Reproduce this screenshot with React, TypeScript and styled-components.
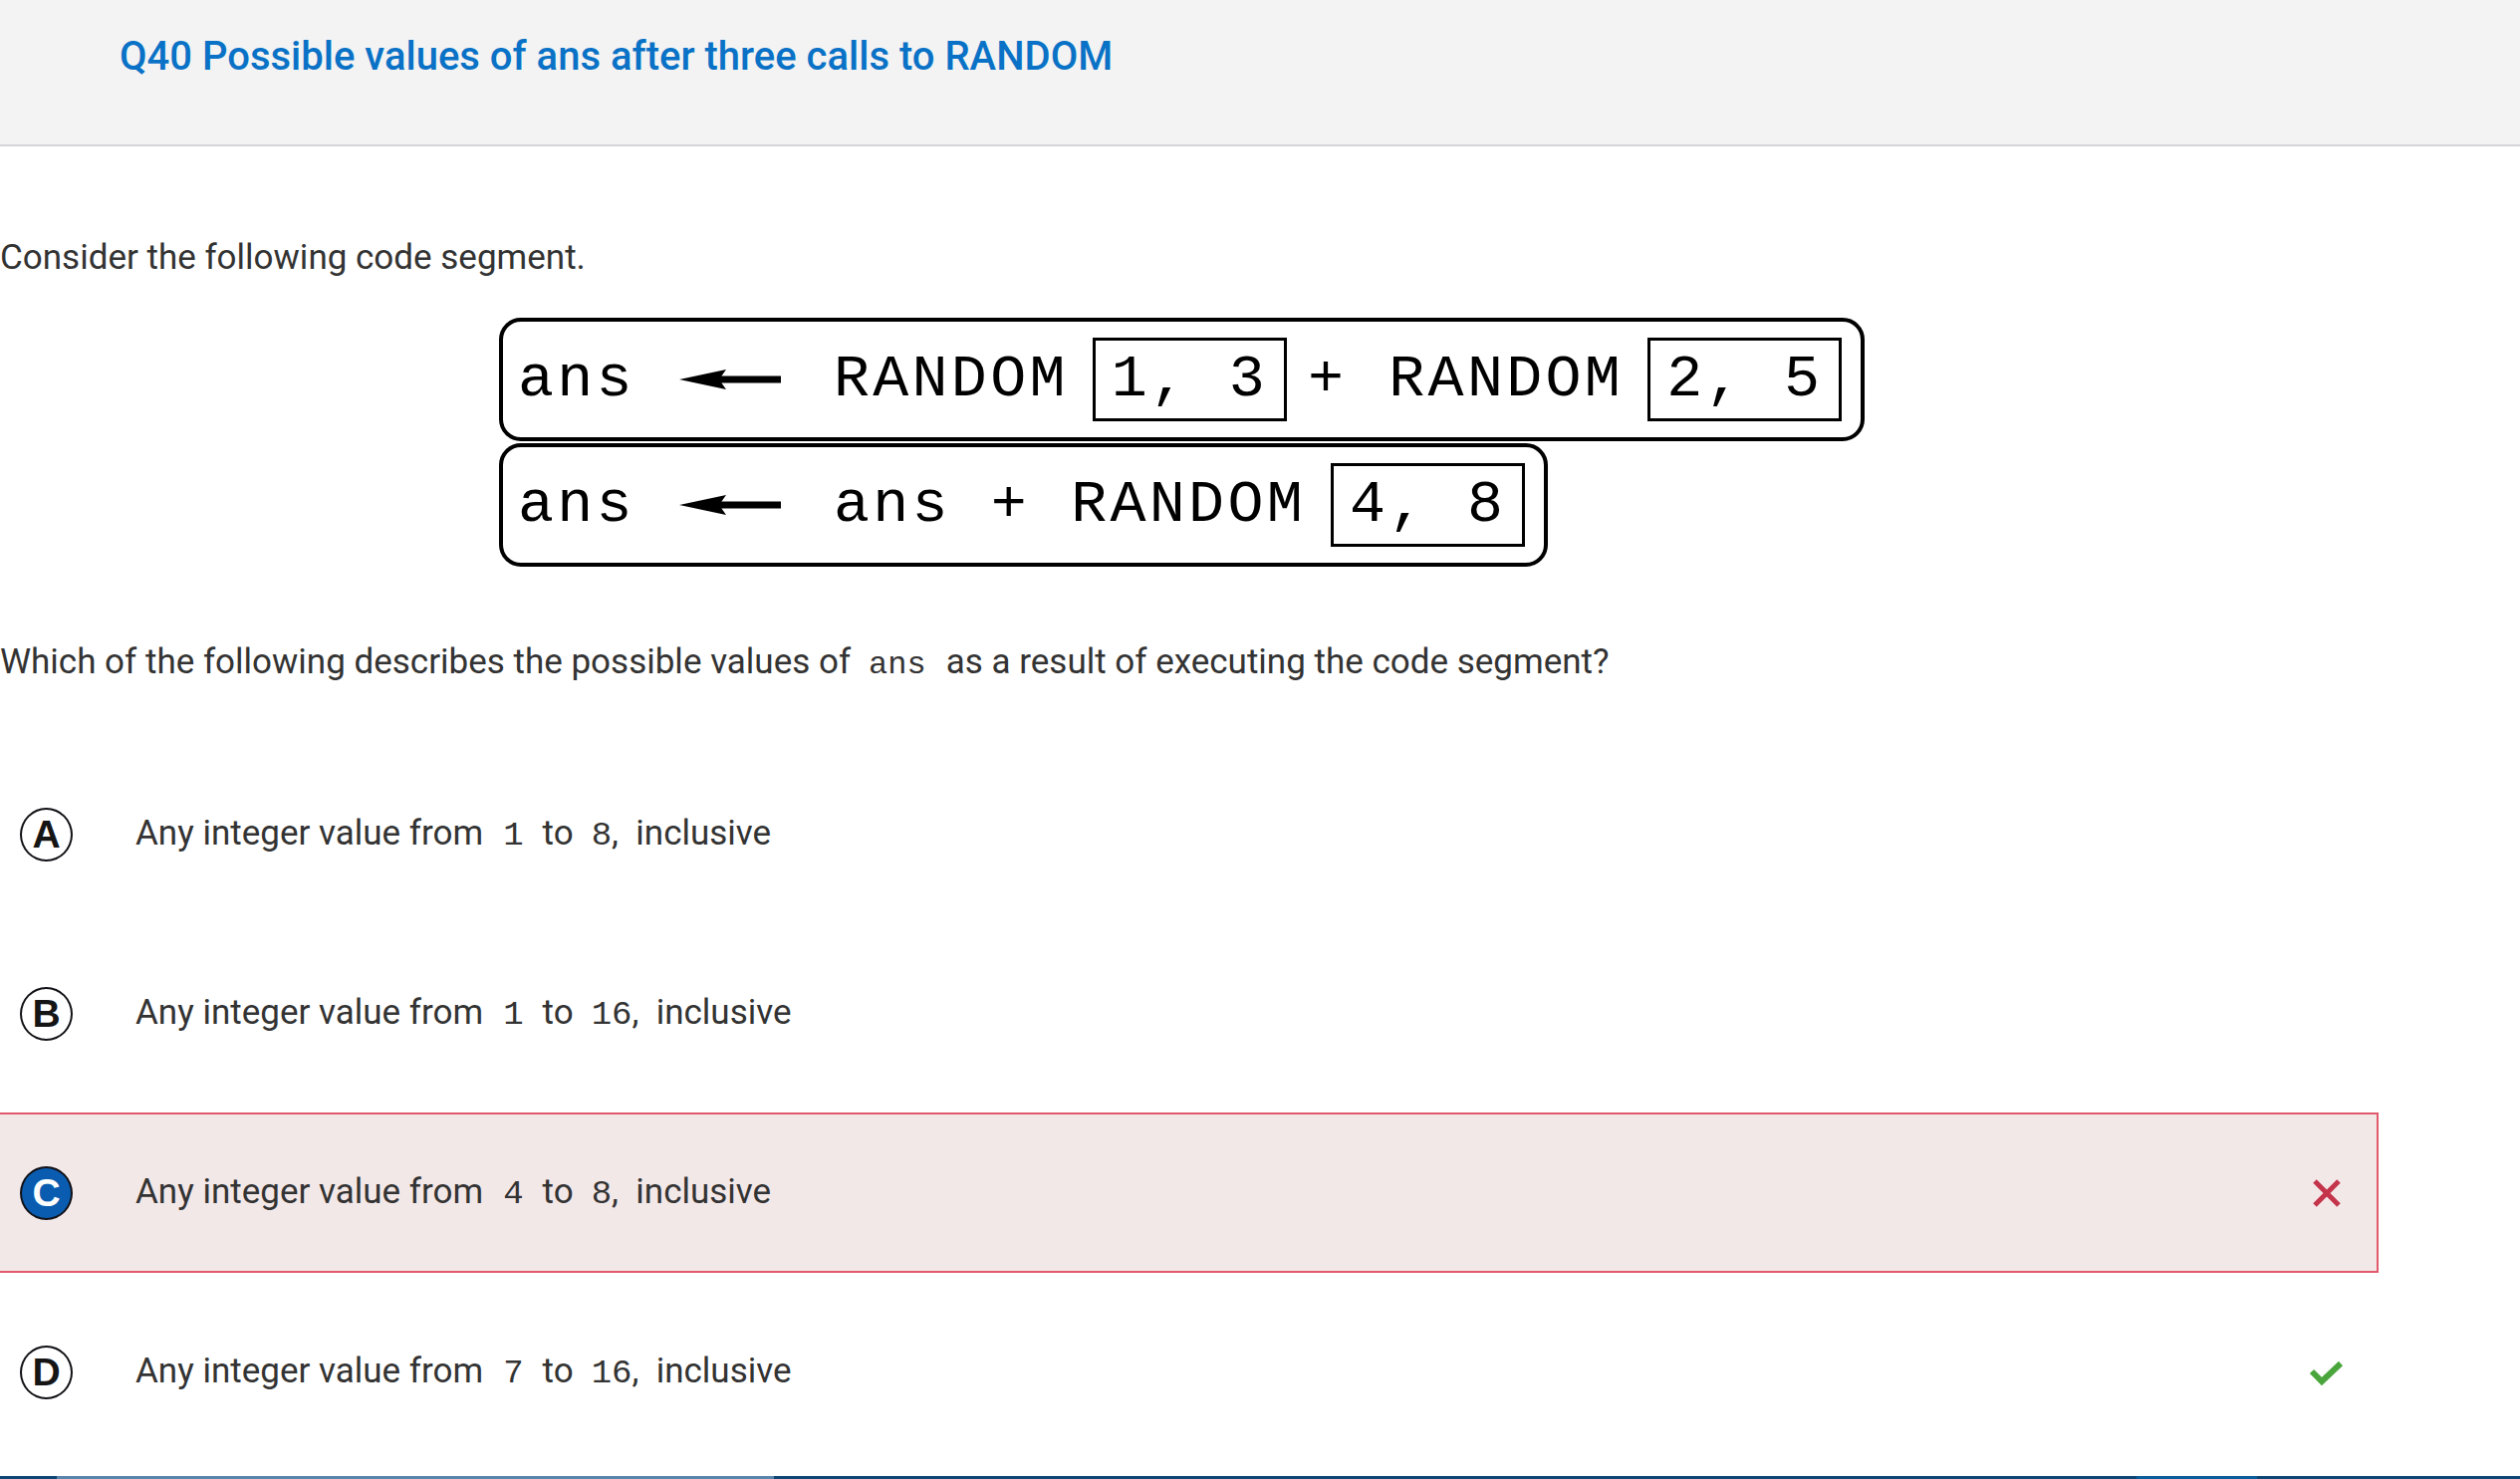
import React from 'react';
import styled, { createGlobalStyle } from 'styled-components';

const Global = createGlobalStyle`
  html, body { margin: 0; padding: 0; background: #ffffff; }
  body {
    font-family: Roboto, "Liberation Sans", Arial, sans-serif;
    color: #333333;
    overflow: hidden;
  }
  * { box-sizing: border-box; }
`;

const Page = styled.div`
  display: flex;
  flex-direction: column;
  width: 100%;
  height: 100vh;
  overflow: hidden;
`;

const Header = styled.header`
  flex-shrink: 0;
  height: 147px;
  background: #f3f3f3;
  border-bottom: 2px solid #d5d5da;
  padding: 37px 0 0 120px;
`;

const Title = styled.h1`
  margin: 0;
  font-size: 40px;
  line-height: 40px;
  font-weight: 500;
  color: #0a72c6;
  white-space: nowrap;
`;

const Main = styled.main`
  flex: 1;
  display: flex;
  flex-direction: column;
  padding-top: 88px;
`;

const Para = styled.p<{ $mt?: number }>`
  margin: ${(p) => p.$mt ?? 0}px 0 0 0;
  font-size: 35px;
  line-height: 48px;
  color: #333333;
  white-space: nowrap;
`;

const InlineCode = styled.code`
  font-family: "Liberation Mono", "Courier New", monospace;
  font-size: 32px;
  margin: 0 20px 0 18px;
  color: #333333;
`;

/* ---------- code figure ---------- */

const Figure = styled.div`
  margin: 36px 0 0 501px;
  display: flex;
  flex-direction: column;
  align-items: flex-start;
  gap: 2px;
`;

const Statement = styled.div`
  display: flex;
  align-items: center;
  height: 124px;
  border: 4px solid #000000;
  border-radius: 22px;
  padding: 0 19px 0 15px;
  font-family: "Liberation Mono", "Courier New", monospace;
  font-size: 60px;
  letter-spacing: 3.3px;
  color: #000000;
`;

const Tok = styled.span<{ $ml?: number }>`
  margin-left: ${(p) => p.$ml ?? 0}px;
  white-space: pre;
  line-height: 1;
`;

const ArgBox = styled.span<{ $ml: number }>`
  margin-left: ${(p) => p.$ml}px;
  height: 84px;
  display: flex;
  align-items: center;
  border: 3px solid #000000;
  padding: 0 16px;
  white-space: pre;
  line-height: 1;
`;

const ArrowSvg = styled.svg<{ $ml: number }>`
  margin-left: ${(p) => p.$ml}px;
  flex-shrink: 0;
  display: block;
`;

const Arrow = ({ ml }: { ml: number }) => (
  <ArrowSvg $ml={ml} width="102" height="22" viewBox="0 0 102 22">
    <polygon points="0,11 47,1 40,11 47,21" fill="#000" />
    <rect x="38" y="7.5" width="64" height="7" fill="#000" />
  </ArrowSvg>
);

/* ---------- options ---------- */

const Options = styled.div`
  margin-top: 65px;
  width: 2388px;
  display: flex;
  flex-direction: column;
  gap: 19px;
`;

const Option = styled.div<{ $wrong?: boolean }>`
  display: flex;
  align-items: center;
  height: 161px;
  border: 2px solid ${(p) => (p.$wrong ? '#e2596b' : 'transparent')};
  border-left: none;
  background: ${(p) => (p.$wrong ? '#f3e8e8' : 'transparent')};
  padding: 0 30px 0 20px;
`;

const Bubble = styled.span<{ $selected?: boolean }>`
  flex-shrink: 0;
  width: 53px;
  height: 54px;
  border-radius: 50%;
  border: 2px solid #111116;
  display: flex;
  align-items: center;
  justify-content: center;
  font-family: "Liberation Sans", Arial, sans-serif;
  font-weight: 700;
  font-size: 39px;
  line-height: 1;
  color: ${(p) => (p.$selected ? '#ffffff' : '#151515')};
  background: ${(p) => (p.$selected ? '#0a5cb0' : '#ffffff')};
`;

const OptionText = styled.span`
  margin-left: 63px;
  font-size: 35px;
  line-height: 48px;
  color: #333333;
  white-space: nowrap;
`;

const Num = styled.span<{ $tight?: boolean }>`
  font-family: "Liberation Mono", "Courier New", monospace;
  font-size: 34px;
  margin: 0 ${(p) => (p.$tight ? 0 : 19)}px 0 ${(p) => (p.$tight ? 18 : 20)}px;
`;

const Mark = styled.span`
  margin-left: auto;
  width: 40px;
  height: 40px;
  display: flex;
  align-items: center;
  justify-content: center;
`;

const WrongIcon = () => (
  <svg width="28" height="28" viewBox="0 0 28 28">
    <path d="M2 2 L26 26 M26 2 L2 26" stroke="#c4344b" strokeWidth="5" fill="none" />
  </svg>
);

const RightIcon = () => (
  <svg width="36" height="28" viewBox="0 0 36 28">
    <polyline points="3,13 13,23 32,5" stroke="#4aa63c" strokeWidth="6" fill="none" />
  </svg>
);

/* ---------- bottom bar ---------- */

const ProgressBar = styled.div`
  flex-shrink: 0;
  height: 3px;
  display: grid;
  grid-template-columns: 57px 720px 1368px 121px 1fr;
`;

const Segment = styled.span<{ $color: string }>`
  background: ${(p) => p.$color};
`;

type Choice = {
  letter: string;
  from: string;
  to: string;
  selected?: boolean;
  wrong?: boolean;
  correct?: boolean;
};

const choices: Choice[] = [
  { letter: 'A', from: '1', to: '8' },
  { letter: 'B', from: '1', to: '16' },
  { letter: 'C', from: '4', to: '8', selected: true, wrong: true },
  { letter: 'D', from: '7', to: '16', correct: true },
];

export default function App() {
  return (
    <Page>
      <Global />
      <Header>
        <Title>Q40 Possible values of ans after three calls to RANDOM</Title>
      </Header>
      <Main>
        <Para>Consider the following code segment.</Para>
        <Figure>
          <Statement>
            <Tok>ans</Tok>
            <Arrow ml={44} />
            <Tok $ml={53}>RANDOM</Tok>
            <ArgBox $ml={24}>1, 3</ArgBox>
            <Tok $ml={21}>+</Tok>
            <Tok $ml={42}>RANDOM</Tok>
            <ArgBox $ml={24}>2, 5</ArgBox>
          </Statement>
          <Statement>
            <Tok>ans</Tok>
            <Arrow ml={44} />
            <Tok $ml={53}>ans</Tok>
            <Tok $ml={40}>+</Tok>
            <Tok $ml={41}>RANDOM</Tok>
            <ArgBox $ml={25}>4, 8</ArgBox>
          </Statement>
        </Figure>
        <Para $mt={72}>
          Which of the following describes the possible values of<InlineCode>ans</InlineCode>as a result of
          executing the code segment?
        </Para>
        <Options>
          {choices.map((c) => (
            <Option key={c.letter} $wrong={c.wrong}>
              <Bubble $selected={c.selected}>{c.letter}</Bubble>
              <OptionText>
                Any integer value from<Num>{c.from}</Num>to<Num $tight>{c.to}</Num>,{'\u00a0'} inclusive
              </OptionText>
              {c.wrong && (
                <Mark>
                  <WrongIcon />
                </Mark>
              )}
              {c.correct && (
                <Mark>
                  <RightIcon />
                </Mark>
              )}
            </Option>
          ))}
        </Options>
      </Main>
      <ProgressBar>
        <Segment $color="#0e4675" />
        <Segment $color="#5b86ac" />
        <Segment $color="#0e4675" />
        <Segment $color="#0b5d9b" />
        <Segment $color="#0e4675" />
      </ProgressBar>
    </Page>
  );
}
